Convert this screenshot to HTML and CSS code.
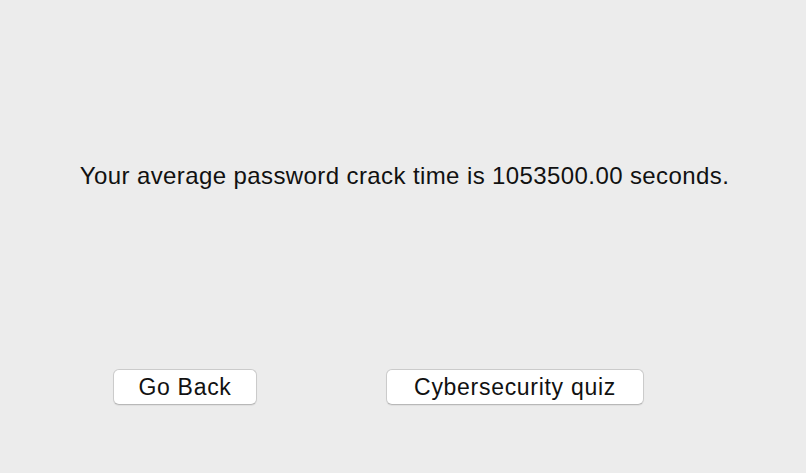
FILE: index.html
```html
<!DOCTYPE html>
<html>
  <head>
    <title>Password Crack Time</title>
    <meta charset="utf8">
    <link rel="stylesheet" href="styles.css">
  </head>
  <body>
    <div class="window">
      <p class="result">Your average password crack time is 1053500.00 seconds.</p>
      <div class="actions">
        <button class="btn btn-back">Go Back</button>
        <button class="btn btn-quiz">Cybersecurity quiz</button>
      </div>
    </div>
  </body>
</html>
```
FILE: styles.css
```css
html, body {
  margin: 0;
  padding: 0;
  background-color: #ececec;
}

body {
  width: 806px;
  height: 473px;
  overflow: hidden;
  font-family: 'Liberation Sans', Arial, sans-serif;
  color: #111;
}

.window {
  display: flex;
  flex-direction: column;
  padding-top: 160px;
}

.result {
  margin: 0;
  font-size: 24px;
  line-height: 32px;
  letter-spacing: 0.4px;
  text-align: center;
  padding-left: 3px;
}

.actions {
  display: flex;
  gap: 129px;
  margin-top: 177px;
  padding-left: 113px;
}

.btn {
  height: 36px;
  padding: 1px 0 0;
  border: 1px solid #cbcbcb;
  border-bottom-color: #b8b8b8;
  border-radius: 6px;
  background-color: #fff;
  box-shadow: 0 1px 1px rgba(0, 0, 0, 0.06);
  font-family: 'Liberation Sans', Arial, sans-serif;
  font-size: 23px;
  letter-spacing: 0.7px;
  color: #111;
}

.btn-back {
  width: 144px;
}

.btn-quiz {
  width: 258px;
}
```
